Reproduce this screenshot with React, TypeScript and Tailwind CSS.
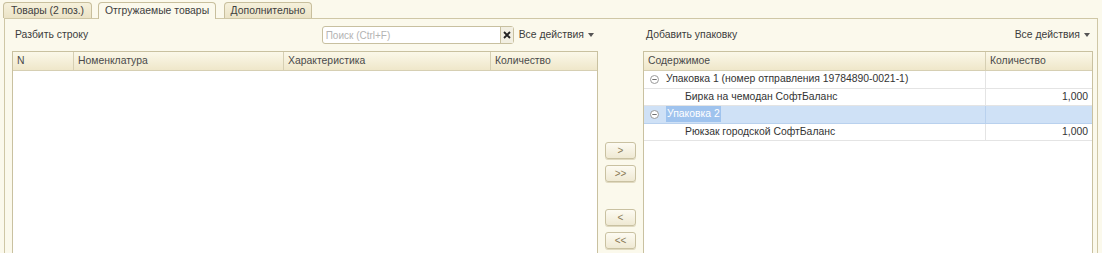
import React from "react";

const leftCols = [
  { title: "N", w: "w-[61px]" },
  { title: "Номенклатура", w: "w-[210px]" },
  { title: "Характеристика", w: "w-[207px]" },
  { title: "Количество", w: "flex-1" },
];

const treeRows = [
  { text: "Упаковка 1 (номер отправления 19784890-0021-1)", qty: "", group: true, selected: false },
  { text: "Бирка на чемодан СофтБаланс", qty: "1,000", group: false, selected: false },
  { text: "Упаковка 2", qty: "", group: true, selected: true },
  { text: "Рюкзак городской СофтБаланс", qty: "1,000", group: false, selected: false },
];

function Collapse() {
  return (
    <svg width="9" height="9" viewBox="0 0 9 9" className="shrink-0">
      <circle cx="4.5" cy="4.5" r="4" fill="white" stroke="#9a9a9a" strokeWidth="1" />
      <line x1="2.3" y1="4.5" x2="6.7" y2="4.5" stroke="#707070" strokeWidth="1" />
    </svg>
  );
}

function AllActions() {
  return (
    <span className="flex items-center gap-[4px] text-[#3c3c3c]">
      Все действия
      <svg width="6" height="4" viewBox="0 0 6 4">
        <path d="M0 0 H6 L3 4 Z" fill="#555" />
      </svg>
    </span>
  );
}

function MoveButton({ label }: { label: string }) {
  return (
    <div className="w-[31px] h-[17px] rounded-[3px] border border-[#c9c1a1] bg-gradient-to-b from-[#fdfbf2] to-[#efe9d3] flex items-center justify-center text-[10px] text-[#8a7a55] shadow-[0_1px_0_#e0d9bf]">
      {label}
    </div>
  );
}

export default function App() {
  return (
    <div
      className="w-[1102px] h-[253px] overflow-hidden bg-[#fbf9ec] text-[10.4px] text-[#444] flex flex-col"
      style={{ fontFamily: '"Liberation Sans", Arial, sans-serif' }}
    >
      {/* Tabs */}
      <div className="flex items-end h-[18px] pl-[3px] gap-[6px] relative z-10">
        <div className="w-[89px] h-[16px] flex items-center justify-center rounded-t-[4px] border border-b-0 border-[#c8bf9d] bg-gradient-to-b from-[#f6f1dc] to-[#ebe3c6] text-[#404040]">
          Товары (2 поз.)
        </div>
        <div className="w-[118px] h-[17px] mb-[-1px] flex items-center justify-center rounded-t-[4px] border border-b-0 border-[#c8bf9d] bg-[#fbf9ec] text-[#404040]">
          Отгружаемые товары
        </div>
        <div className="w-[88px] h-[16px] ml-[2px] flex items-center justify-center rounded-t-[4px] border border-b-0 border-[#c8bf9d] bg-gradient-to-b from-[#f6f1dc] to-[#ebe3c6] text-[#404040]">
          Дополнительно
        </div>
      </div>

      {/* Panel */}
      <div className="flex-1 ml-[4px] mr-[4px] border-t border-l border-r border-[#cfc7a6] flex pl-[7px] min-h-0">
        {/* Left side */}
        <div className="w-[586px] flex flex-col">
          <div className="h-[32px] flex items-center">
            <span className="ml-[3px] text-[#3c3c3c]">Разбить строку</span>
            <div className="ml-auto w-[192px] h-[18px] rounded-[3px] border border-[#c8c0a0] bg-white flex items-stretch">
              <span className="flex-1 pl-[3px] flex items-center text-[#b3b3b3] text-[10px]">Поиск (Ctrl+F)</span>
              <span className="w-[13px] border-l border-[#c8c0a0] bg-[#f2efe2] flex items-center justify-center">
                <svg width="8" height="8" viewBox="0 0 8 8">
                  <path d="M1 1 L7 7 M7 1 L1 7" stroke="#222" strokeWidth="1.8" />
                </svg>
              </span>
            </div>
            <span className="ml-[5px] mr-[4px]">
              <AllActions />
            </span>
          </div>
          <div className="flex-1 border border-b-0 border-[#c9c1a0] bg-white flex flex-col">
            <div className="h-[19px] flex bg-gradient-to-b from-[#fbf8e9] to-[#efe7ca] border-b border-[#d6cfb3]">
              {leftCols.map((c, i) => (
                <div
                  key={i}
                  className={`${c.w} px-[4px] flex items-center text-[#4a4a4a] ${i < 3 ? "border-r border-[#d6cfb3]" : ""}`}
                >
                  {c.title}
                </div>
              ))}
            </div>
          </div>
        </div>

        {/* Move buttons */}
        <div className="w-[45px] flex flex-col items-center pt-[123px]">
          <MoveButton label=">" />
          <div className="h-[6px]" />
          <MoveButton label=">>" />
          <div className="h-[27px]" />
          <MoveButton label="<" />
          <div className="h-[6px]" />
          <MoveButton label="<<" />
        </div>

        {/* Right side */}
        <div className="w-[450px] flex flex-col">
          <div className="h-[32px] flex items-center justify-between">
            <span className="ml-[3px] text-[#3c3c3c]">Добавить упаковку</span>
            <span className="mr-[3px]">
              <AllActions />
            </span>
          </div>
          <div className="flex-1 border border-b-0 border-[#c9c1a0] bg-white flex flex-col">
            <div className="h-[19px] flex bg-gradient-to-b from-[#fbf8e9] to-[#efe7ca] border-b border-[#d6cfb3]">
              <div className="w-[342px] px-[4px] flex items-center border-r border-[#d6cfb3] text-[#4a4a4a]">Содержимое</div>
              <div className="flex-1 px-[4px] flex items-center text-[#4a4a4a]">Количество</div>
            </div>
            {treeRows.map((r, i) => (
              <div
                key={i}
                className={`h-[17.5px] flex border-b ${r.selected ? "bg-[#cfe1f6] border-[#b9d1ee]" : "border-[#e4e4e4]"}`}
              >
                <div className={`w-[342px] flex items-center border-r ${r.selected ? "border-[#b9d1ee]" : "border-[#e4e4e4]"}`}>
                  {r.group ? (
                    <>
                      <span className="ml-[6px] mr-[7px] flex"><Collapse /></span>
                      <span
                        className={
                          r.selected
                            ? "bg-[#9fc3ee] text-white px-[1px] h-[16px] flex items-center"
                            : "text-[#333]"
                        }
                      >
                        {r.text}
                      </span>
                    </>
                  ) : (
                    <span className="ml-[41px] text-[#333]">{r.text}</span>
                  )}
                </div>
                <div className="flex-1 flex items-center justify-end pr-[4px] text-[#333]">{r.qty}</div>
              </div>
            ))}
          </div>
        </div>
      </div>
    </div>
  );
}
